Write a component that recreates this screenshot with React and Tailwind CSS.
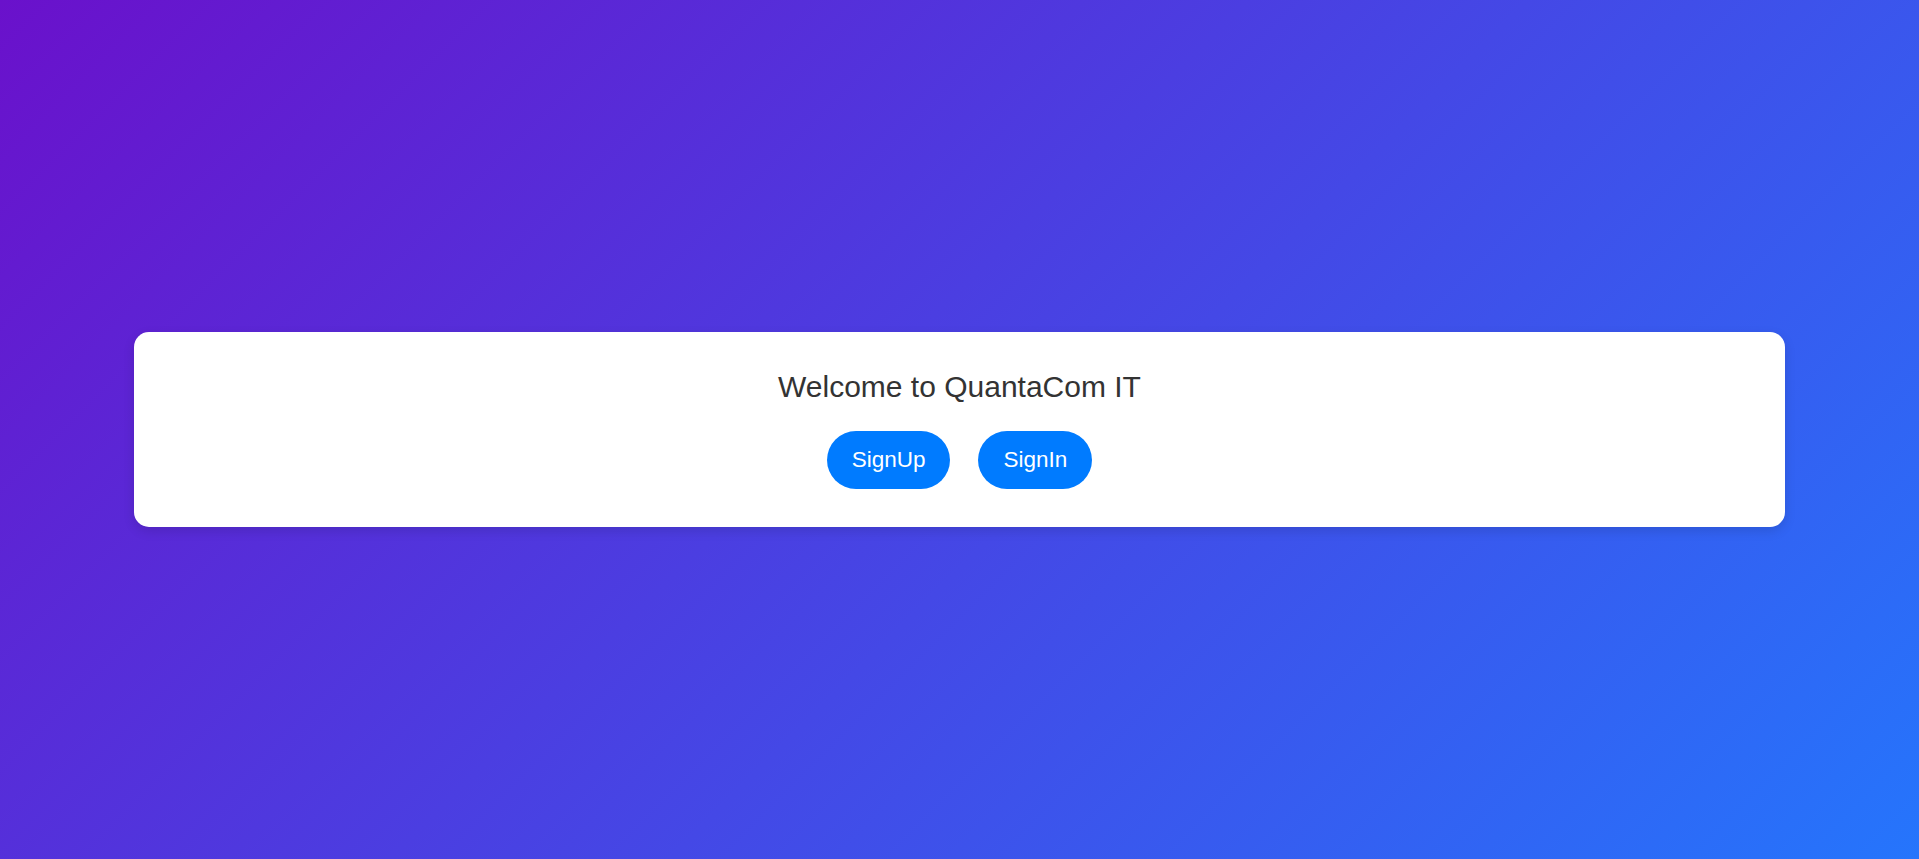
import React from 'react';

export default function App() {
  return (
    <div className="min-h-screen flex items-center justify-center bg-[linear-gradient(135deg,#6a11cb,#2575fc)] font-['Liberation_Sans',Arial,sans-serif]">
      {/* Welcome card */}
      <div className="w-[86%] bg-white rounded-[15px] shadow-[0_4px_12px_rgba(0,0,0,0.12)] pt-[38px] pb-[38px] flex flex-col items-center">
        <h2 className="text-[30px] leading-[34.5px] font-normal text-[#333] mb-[27px]">Welcome to QuantaCom IT</h2>
        <div className="flex items-center gap-[28px]">
          <button className="bg-[#007bff] text-white text-[22.5px] leading-[26px] px-[25px] py-4 rounded-full">SignUp</button>
          <button className="bg-[#007bff] text-white text-[22.5px] leading-[26px] px-[25px] py-4 rounded-full">SignIn</button>
        </div>
      </div>
    </div>
  );
}
